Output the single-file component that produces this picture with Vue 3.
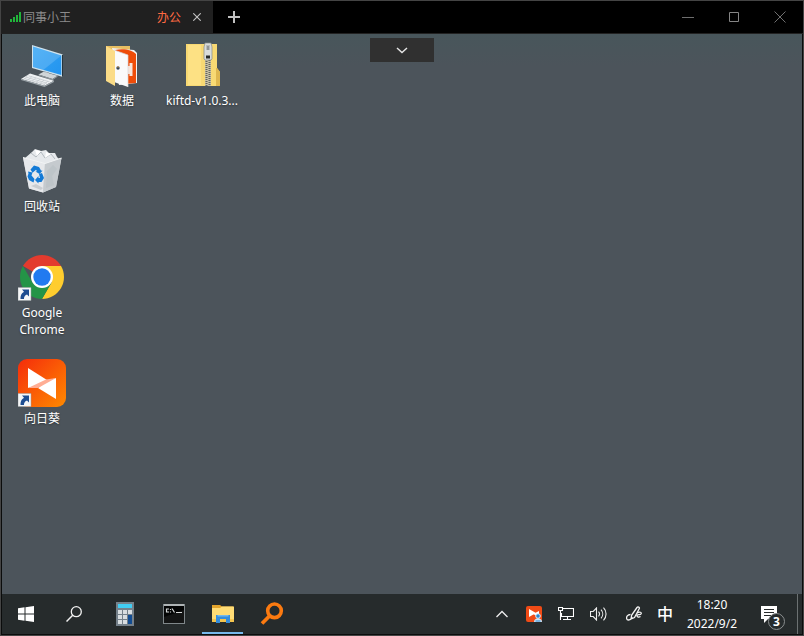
<script setup>
import { ref } from 'vue'

const columns = [
  [
    { id: 'pc', label: '此电脑' },
    { id: 'bin', label: '回收站' },
    { id: 'chrome', label: 'Google Chrome', shortcut: true },
    { id: 'sun', label: '向日葵', shortcut: true },
  ],
  [{ id: 'data', label: '数据' }],
  [{ id: 'zip', label: 'kiftd-v1.0.3...' }],
]
const active = ref('folder')
</script>

<template>
  <div class="window">
    <header class="titlebar">
      <div class="tab">
        <svg class="signal" width="11" height="10" viewBox="0 0 11 10" aria-hidden="true">
          <path d="M0 7h2v3H0zM3 5h2v5H3zM6 3h2v7H6zM9 0h2v10H9z" fill="#20b53a" />
        </svg>
        <span class="tab-name">同事小王</span>
        <span class="tab-group">办公</span>
        <button class="tab-close" aria-label="关闭标签">
          <svg width="8" height="8" viewBox="0 0 8 8"><path d="M.3 .3l7.400 7.400M7.700 .3L.3 7.700" stroke="#c4c4c4" stroke-width="1.1" /></svg>
        </button>
      </div>
      <button class="tab-add" aria-label="新建标签">
        <svg width="12" height="12" viewBox="0 0 12 12"><path d="M6 0v12M0 6h12" stroke="#c0c0c0" stroke-width="2" /></svg>
      </button>
      <div class="controls">
        <button aria-label="最小化">
          <svg width="12" height="12" viewBox="0 0 12 12"><path d="M0 6.500h12" stroke="#6e6e6e" /></svg>
        </button>
        <button aria-label="最大化">
          <svg width="10" height="10" viewBox="0 0 10 10"><path d="M.5 .5h9v9h-9z" fill="none" stroke="#858585" /></svg>
        </button>
        <button aria-label="关闭">
          <svg width="12" height="12" viewBox="0 0 12 12"><path d="M.5 .5l11 11M11.500 .5l-11 11" stroke="#707070" /></svg>
        </button>
      </div>
    </header>

    <main class="desktop">
      <button class="pull" aria-label="展开工具栏">
        <svg width="12" height="7" viewBox="0 0 12 7"><path d="M1 1l5 4.600L11 1" fill="none" stroke="#e6e6e6" stroke-width="1.400" /></svg>
      </button>
      <ul v-for="(column, i) in columns" :key="i" class="column">
        <li v-for="item in column" :key="item.id">
          <button class="shortcut">
            <svg width="48" height="48" viewBox="0 0 48 48" aria-hidden="true">
              <g v-if="item.id === 'pc'">
                <path d="M14 4l31 9.500v22.500l-31-9z" fill="#cfe3ee" />
                <path d="M15 5.500l28.300 9v19.500L15 26z" fill="url(#screen)" />
                <path d="M15 5.500l28.300 9-18 14.500L15 26z" fill="#fff" opacity=".16" />
                <path d="M44 13.500l1 .4v22l-1-.3z" fill="#27343b" />
                <path d="M27 30.500l4 1v3l-4-1z" fill="#9fa8ad" />
                <path d="M20.500 33.500l5-2.800 14 4-5 3.300z" fill="#d0d5d8" />
                <path d="M20.500 33.500l14 4.500 5-3.300v1l-5 3.500-14-4.700z" fill="#8f989d" />
                <path d="M3 38l9-5.500 24 7.200-9.500 5z" fill="#eef0f2" />
                <path d="M3 38l23.500 6.700 9.500-5v1.200l-9.500 5L3 39z" fill="#9ba4a9" />
                <path d="M6 37.500l21 6M8.200 36.200l21 6M10.500 34.800l21 6M9.500 34.500l-3 3.800M14 35.500l-4.500 4M18 36.700l-4.500 4M22 38l-4.500 4M26 39l-4.500 4M30 40l-4.500 4" stroke="#b9c0c4" stroke-width=".6" fill="none" />
              </g>
              <g v-else-if="item.id === 'bin'">
                <path d="M7 11l7-6 3-3 6 2 5-1 3 3 6 0 2 4 3 3-15 5z" fill="#e6e9ec" />
                <path d="M13 6l5 4 5-5 4 6 6-4 4 5" fill="none" stroke="#b3babf" />
                <path d="M17 3l6 1-4 5zM28 5l5 2-6 4z" fill="#fff" />
                <path d="M5 10.500l22 6L43.500 11l-5.500 29L25 45.500l-14-4z" fill="#d4d8dc" />
                <path d="M5 10.500l22 6L25 45.500l-14-4z" fill="#e6e8eb" />
                <path d="M27 16.500L43.500 11 38 40l-13 5.500z" fill="#c5cace" />
                <path d="M5 10.500l22 6L43.500 11" fill="none" stroke="#f2f4f5" />
                <path d="M29 24l6-6 4 4-5 7 2 9-8 3z" fill="#b6bdc2" opacity=".5" />
                <path d="M8 17l17 5-6-2zM13 39l5-2 7 4-2 2z" fill="#c9cdd1" />
                <path d="M12.500 22.500l3.500-4 5 1.500 2 3.500 1.500 .2-3 3.300-4-2.500 1.500-.3-1-1.500-3.500 3z" fill="#137ad6" />
                <path d="M10 24.500l4.500 1-1 3 3 3.500-1 3.500L11 33l-1.500-3.500 1-3z" fill="#137ad6" />
                <path d="M21 27l3-1 2 5-2.500 4h-3v1.500L17 33l3.500-4v2h1.500z" fill="#137ad6" />
              </g>
              <g v-else-if="item.id === 'chrome'">
                <path d="M24 24L4.950 13A22 22 0 0 1 43.050 13z" fill="#e33b2e" />
                <path d="M24 13h19.050A22 22 0 0 1 24 46l9.530-16.500z" fill="#ffcd2e" />
                <path d="M33.530 29.500L24 46A22 22 0 0 1 4.950 13l9.520 16.500L24 35z" fill="#249447" />
                <circle cx="24" cy="24" r="11" fill="#fff" />
                <circle cx="24" cy="24" r="8.700" fill="#217af0" />
              </g>
              <g v-else-if="item.id === 'sun'">
                <rect width="48" height="48" rx="9" fill="url(#orange)" />
                <path d="M10 9l19 12-8 5-11 3z" fill="#fff" />
                <path d="M38 19v21L20 29l9-7z" fill="#fff" />
                <path d="M10 29l18-8.500 10-1.500-18 10z" fill="#ffad94" />
              </g>
              <g v-else-if="item.id === 'data'">
                <path d="M8 5h24v34H8z" fill="#e8bf62" />
                <path d="M14 7l22 2 3 3v30l-18 2z" fill="#f3f3f3" />
                <path d="M17 9c9-2 17 0 21 4v29l-12 1z" fill="#ef4c08" />
                <path d="M30 25l1.500 0 0-3 3 0v13l-3 0 0-2-1.500 0z" fill="#f7e4da" />
                <path d="M16 9l14 5v32l-14-5z" fill="#fafafa" />
                <path d="M16 9l14 5v32" fill="none" stroke="#d5d5d5" stroke-width=".7" />
                <path d="M8 5l9 5v35l-9-5z" fill="#fbdc87" />
                <circle cx="20" cy="27" r="1.700" fill="#344657" /><circle cx="20" cy="26" r=".7" fill="#e7a247" />
              </g>
              <g v-else>
                <path d="M8 3h31v24l3 4v14H8z" fill="#f8d973" />
                <path d="M10 4h13v40H10z" fill="#ffe58d" opacity=".65" />
                <path d="M39 27l3 4v14h-4V27z" fill="#dfb74f" />
                <path d="M27 10h6v35h-6z" fill="#c9c1a4" />
                <path d="M28.500 18v27M31.500 19v26" stroke="#62655e" stroke-width="2" stroke-dasharray="1 1" />
                <path d="M27 2h6l1 4v12l-1 1h-6l-1-1V6z" fill="#d9dcda" stroke="#85898a" stroke-width=".7" />
                <path d="M28 4h4v5h-4z" fill="#b8bcbc" /><path d="M29 6h2M29 8h2" stroke="#6c7070" />
                <path d="M28 14.500h4v3h-4z" fill="#252929" />
              </g>
              <g v-if="item.shortcut">
                <path d="M0 34.500h13V47.500H0z" fill="#f5f6f7" stroke="#9ba0a4" stroke-width=".5" />
                <path d="M4 36.500h7v7l-2-2c-2.500 1-3 2.500-3 4.500H2.500c0-4 1-5.500 3.500-7.300z" fill="#1e4d91" />
              </g>
            </svg>
            <span>{{ item.label }}</span>
          </button>
        </li>
      </ul>
    </main>

    <footer class="taskbar">
      <button class="task" aria-label="开始">
        <svg width="16" height="16" viewBox="0 0 16 16"><path d="M0 2.200L6.500 1.300v6.200H0zM7.500 1.200L16 0v7.500H7.500zM0 8.500h6.500v6.200L0 13.800zM7.500 8.500H16V16l-8.500-1.200z" fill="#fff" /></svg>
      </button>
      <button class="task" aria-label="搜索">
        <svg width="16" height="16" viewBox="0 0 16 16"><circle cx="10.300" cy="5.700" r="5" fill="none" stroke="#f2f2f2" stroke-width="1.300" /><path d="M6.700 9.300L.5 15.500" stroke="#f2f2f2" stroke-width="1.500" /></svg>
      </button>
      <div class="apps">
        <button class="app" aria-label="计算器" @click="active = 'calc'" :class="{ active: active === 'calc' }">
          <svg width="18" height="24" viewBox="0 0 18 24">
            <path d="M0 0h18v24H0z" fill="#74808a" /><path d="M2 2h14v4H2z" fill="#41cdf3" />
            <path d="M2 8h4v4H2zM7 8h4v4H7zM12 8h4v4h-4zM2 13h4v4H2zM7 13h4v4H7zM2 18h4v4H2zM7 18h4v4H7z" fill="#d8dde0" />
            <path d="M12 13h4v9h-4z" fill="#124c91" />
          </svg>
        </button>
        <button class="app" aria-label="命令提示符" @click="active = 'cmd'" :class="{ active: active === 'cmd' }">
          <svg width="22" height="20" viewBox="0 0 22 20">
            <path d="M0 0h22v20H0z" fill="#80878a" /><path d="M1 2h20v17H1z" fill="#030404" />
            <path d="M1 1h20" stroke="#dce0e0" />
            <path d="M6 5H3.500v3H6M7.500 5v1M7.500 7.500v1M9 4.500l2.500 4M13 8.500h6" fill="none" stroke="#d4d7d7" stroke-width="1.200" />
            <path d="M1 13L21 6v13H1z" fill="#fff" opacity=".07" />
          </svg>
        </button>
        <button class="app" aria-label="文件资源管理器" @click="active = 'folder'" :class="{ active: active === 'folder' }">
          <svg width="22" height="18" viewBox="0 0 22 18">
            <path d="M0 0h8l2 1.500h11V6H0z" fill="#e3a42c" /><path d="M0 3h8l2-1.500h12V17H0z" fill="#ffdc75" />
            <path d="M0 14h22v3H0z" fill="#f4c54f" /><path d="M4 10h14v8h-4v-4H8v4H4z" fill="#348ddd" />
            <path d="M5.500 10h11v1.500h-11z" fill="#72b9ee" />
          </svg>
        </button>
        <button class="app" aria-label="文件搜索" @click="active = 'find'" :class="{ active: active === 'find' }">
          <svg width="24" height="24" viewBox="0 0 24 24"><circle cx="14.500" cy="8.800" r="6.800" fill="none" stroke="#fb7a10" stroke-width="3.600" /><path d="M9.500 14L2 21.500" stroke="#fb7a10" stroke-width="3.800" /></svg>
        </button>
      </div>
      <div class="tray">
        <button aria-label="显示隐藏的图标">
          <svg width="12" height="8" viewBox="0 0 12 8"><path d="M.5 7L6 1.500 11.500 7" fill="none" stroke="#eee" stroke-width="1.300" /></svg>
        </button>
        <button aria-label="向日葵">
          <svg width="16" height="16" viewBox="0 0 16 16">
            <rect width="16" height="16" rx="2" fill="#f04b16" />
            <path d="M3 3l7 4-7 4zM13 5v6L7 8z" fill="#fff" />
            <circle cx="12" cy="10" r="2.300" fill="#2c83c9" stroke="#e0f1ff" /><path d="M8 16c0-5 8-5 8 0z" fill="#c9e5fa" /><path d="M9.500 15h5" stroke="#2c83c9" />
          </svg>
        </button>
        <button aria-label="网络">
          <svg width="16" height="14" viewBox="0 0 16 14"><path d="M5 1.500h10.500v8H3.500V6M9.500 9.500v3M5 12.500h8M.5 .5h4v3h-4zM2.500 4v9" fill="none" stroke="#fff" stroke-width="1.100" /></svg>
        </button>
        <button aria-label="音量">
          <svg width="17" height="14" viewBox="0 0 17 14"><path d="M.5 4.500h2.700L6.500 1v12L3.200 9.500H.5zM8.500 4.700c1.200 1.300 1.200 3.300 0 4.600M11 2.700c2.300 2.500 2.300 6.100 0 8.600M13.500 .7c3.400 3.600 3.400 9 0 12.600" fill="none" stroke="#eee" stroke-width="1.100" /></svg>
        </button>
        <button class="pen" aria-label="手写">
          <svg width="16" height="16" viewBox="0 0 16 16"><path d="M5 13l.7-4L11 1.500c.9-1.300 3-.1 2.200 1.300L8.500 11.500zM4.500 8.500C1.500 8.500 .2 11 .7 12.800c.6 2 4 1.500 6-1.300M10.500 7.500c3.500-2.500 5.500-1 4.500 .5-.9 1.400-3-.3-3.800 1.200-.8 1.600 1.300 2.500 3.300 1.300" fill="none" stroke="#f4f4f4" stroke-width="1.300" /></svg>
        </button>
        <button class="ime" aria-label="输入法">中</button>
        <button class="clock"><time>18:20</time><time>2022/9/2</time></button>
        <button class="notice" aria-label="3 条新通知">
          <svg width="16" height="17" viewBox="0 0 16 17"><path d="M0 0h16v13H7l-4 4v-4H0z" fill="#fff" /><path d="M3 3.500h10M3 6.500h10M3 9.500h7" stroke="#25292a" /></svg>
          <span class="badge">3</span>
        </button>
        <button class="peek" aria-label="显示桌面"></button>
      </div>
    </footer>

    <svg class="defs" width="0" height="0" aria-hidden="true">
      <defs>
        <linearGradient id="screen" x1="0" y1="0" x2="1" y2="1"><stop stop-color="#35a5f4" /><stop offset="1" stop-color="#2394ef" /></linearGradient>
        <linearGradient id="orange" x1="0" y1="0" x2="1" y2="1"><stop stop-color="#f52c0b" /><stop offset="1" stop-color="#ff8a00" /></linearGradient>
      </defs>
    </svg>
  </div>
</template>

<style>
body {
  margin: 0;
  background: #000;
}
</style>

<style scoped>
.window,
.window * {
  box-sizing: border-box;
}
.window {
  display: flex;
  flex-direction: column;
  min-height: 100vh;
  border: 1px solid #444;
  background: #0b0c0c;
  font: 12px/17px "Noto Sans", "Noto Sans CJK SC", sans-serif;
  color: #fff;
}
button {
  display: flex;
  align-items: center;
  justify-content: center;
  margin: 0;
  padding: 0;
  border: 0;
  background: none;
  color: inherit;
  font: inherit;
}
svg {
  display: block;
  flex: none;
}
.titlebar {
  display: flex;
  height: 33px;
  border-bottom: 1px solid #222;
  background: #000;
}
.tab {
  display: flex;
  align-items: center;
  width: 212px;
  padding: 0 8px 0 9px;
  background: #202020;
}
.tab-name {
  margin-left: 2px;
  color: #8c8c8c;
}
.tab-group {
  margin-left: auto;
  color: #ff6a42;
}
.tab-close {
  width: 16px;
  height: 16px;
  margin-left: 8px;
}
.tab-add {
  width: 42px;
}
.controls {
  display: flex;
  margin-left: auto;
}
.controls button {
  width: 46px;
}
.desktop {
  position: relative;
  display: flex;
  flex: 1;
  margin: 0 1px;
  padding-top: 7px;
  background: linear-gradient(#48565b, #4c545b 32px);
}
.pull {
  position: absolute;
  top: 4px;
  left: 50%;
  width: 64px;
  height: 24px;
  transform: translateX(-50%);
  background: #303030;
}
.column {
  width: 80px;
  margin: 0;
  padding: 0;
  list-style: none;
}
.column li {
  height: 106px;
}
.shortcut {
  flex-direction: column;
  gap: 3px;
  width: 100%;
}
.shortcut span {
  max-width: 76px;
  text-shadow: 0 1px 2px #0006;
}
.taskbar {
  display: flex;
  height: 40px;
  margin: 0 1px 1px;
  background: #262b2c;
}
.task {
  width: 48px;
}
.apps {
  display: flex;
  padding-left: 2px;
}
.app {
  position: relative;
  width: 49px;
}
.app.active::after {
  content: "";
  position: absolute;
  right: 4px;
  bottom: 0;
  left: 4px;
  height: 2px;
  background: #76b9ed;
}
.tray {
  display: flex;
  margin-left: auto;
}
.tray button {
  width: 32px;
}
.tray .pen {
  width: 40px;
}
.tray .ime {
  width: 22px;
  font-size: 16px;
  font-weight: 500;
}
.tray .clock {
  flex-direction: column;
  width: 72px;
  line-height: 19px;
}
.tray .notice {
  position: relative;
  width: 49px;
  padding-right: 8px;
}
.badge {
  position: absolute;
  right: 12px;
  bottom: 4px;
  width: 17px;
  height: 17px;
  border: 1px solid #8a8e8f;
  border-radius: 50%;
  background: #262b2c;
  font-weight: 700;
  line-height: 15px;
}
.tray .peek {
  width: 5px;
  border-left: 1px solid #6c7172;
}
.defs {
  position: absolute;
}
</style>
